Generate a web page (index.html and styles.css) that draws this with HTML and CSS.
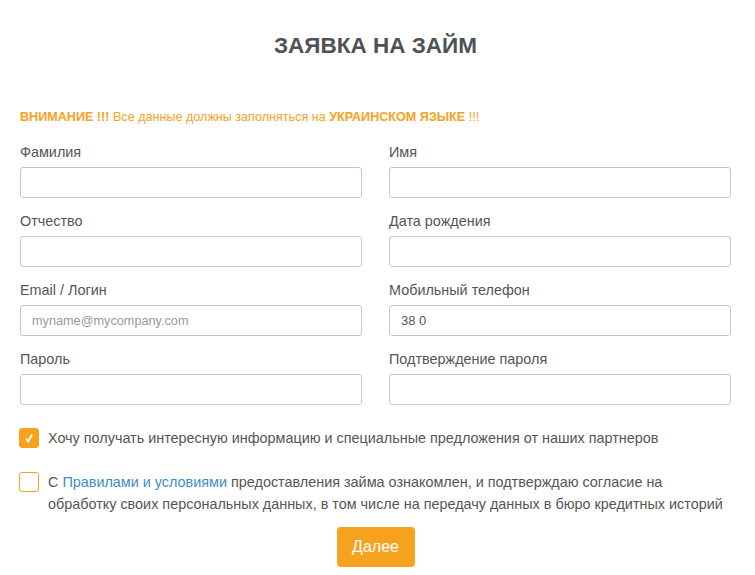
FILE: index.html
```html
<!DOCTYPE html>
<html>

<head>
    <title>Заявка на займ</title>
    <link rel="stylesheet" href="styles.css">
</head>

<body>
    <div class="page">
        <h1 class="title">ЗАЯВКА НА ЗАЙМ</h1>

        <p class="warning"><b>ВНИМАНИЕ !!!</b> Все данные должны заполняться на <b>УКРАИНСКОМ ЯЗЫКЕ</b> !!!</p>

        <form class="loan-form" onsubmit="return false;">
            <div class="grid">
                <div class="field">
                    <label>Фамилия</label>
                    <input type="text">
                </div>
                <div class="field">
                    <label>Имя</label>
                    <input type="text">
                </div>
                <div class="field">
                    <label>Отчество</label>
                    <input type="text">
                </div>
                <div class="field">
                    <label>Дата рождения</label>
                    <input type="text">
                </div>
                <div class="field">
                    <label>Email / Логин</label>
                    <input type="text" placeholder="myname@mycompany.com">
                </div>
                <div class="field">
                    <label>Мобильный телефон</label>
                    <input type="text" value="38 0">
                </div>
                <div class="field">
                    <label>Пароль</label>
                    <input type="password">
                </div>
                <div class="field">
                    <label>Подтверждение пароля</label>
                    <input type="password">
                </div>
            </div>

            <div class="check-row">
                <span class="box checked">
                    <svg width="12" height="12" viewBox="0 0 12 12"><path d="M3 6.5 L5.2 9.5 L9 2.5" fill="none" stroke="#fff" stroke-width="1.8"/></svg>
                </span>
                <span class="check-text">Хочу получать интересную информацию и специальные предложения от наших партнеров</span>
            </div>

            <div class="check-row">
                <span class="box"></span>
                <span class="check-text">С <a href="#">Правилами и условиями</a> предоставления займа ознакомлен, и подтверждаю согласие на обработку своих персональных данных, в том числе на передачу данных в бюро кредитных историй</span>
            </div>

            <div class="actions">
                <button type="submit" class="btn">Далее</button>
            </div>
        </form>
    </div>
</body>

</html>
```
FILE: styles.css
```css
body {
    font-family: "Liberation Sans", Arial, sans-serif;
    background-color: #fff;
    margin: 0;
    color: #555;
}

.page {
    width: 711px;
    margin-left: 20px;
}

.title {
    font-size: 22.5px;
    font-weight: bold;
    color: #4d5158;
    text-align: center;
    margin: 0;
    padding-top: 34px;
    line-height: 24px;
}

.warning {
    color: #f7a21e;
    font-size: 12.6px;
    margin: 0;
    margin-top: 51px;
    line-height: 16px;
}

.warning b {
    font-weight: bold;
}

.grid {
    display: grid;
    grid-template-columns: 1fr 1fr;
    column-gap: 27px;
    row-gap: 15px;
    margin-top: 19px;
}

.field label {
    display: block;
    font-size: 14.4px;
    line-height: 16px;
    margin-bottom: 7px;
}

.field input {
    display: block;
    box-sizing: border-box;
    width: 100%;
    height: 31px;
    border: 1px solid #c8c8c8;
    border-radius: 3px;
    padding: 0 11px;
    font-family: "Liberation Sans", Arial, sans-serif;
    font-size: 13px;
    color: #555;
}

.field input::placeholder {
    color: #999;
    font-size: 12.7px;
}

.check-row {
    display: flex;
    align-items: flex-start;
    gap: 9px;
    margin-top: 23px;
}

.check-row + .check-row {
    margin-top: 23px;
}

.box {
    flex: none;
    box-sizing: border-box;
    width: 20px;
    height: 20px;
    border: 1px solid #f7a21e;
    border-radius: 3px;
    margin-left: -1px;
    display: flex;
    align-items: center;
    justify-content: center;
}

.box.checked {
    background-color: #f7a21e;
}

.check-text {
    font-size: 14.4px;
    line-height: 22px;
    margin-top: -1px;
}

.check-text a {
    color: #3e8ec9;
    text-decoration: none;
}

.actions {
    text-align: center;
    margin-top: 12px;
}

.btn {
    background-color: #f7a21e;
    color: #fff;
    border: none;
    border-radius: 4px;
    font-family: "Liberation Sans", Arial, sans-serif;
    font-size: 16px;
    width: 78px;
    height: 40px;
    cursor: pointer;
}
```
